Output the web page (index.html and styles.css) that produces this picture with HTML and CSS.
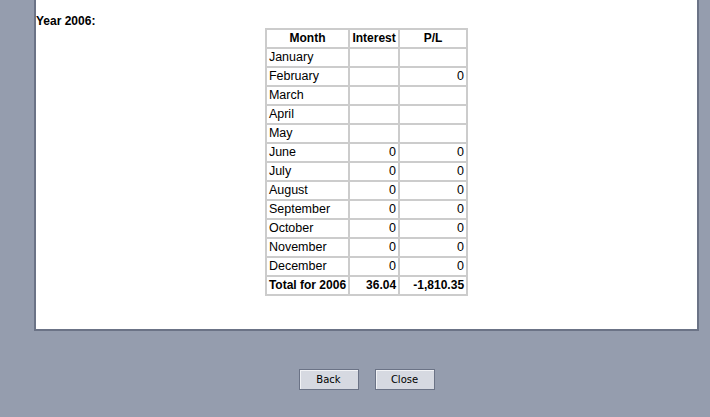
FILE: index.html
```html
<!DOCTYPE html>
<html>
<head>
<meta charset="utf-8">
<link rel="stylesheet" href="styles.css">
</head>
<body>
<div class="panel">
  <div class="year">Year 2006:</div>
  <table class="report">
    <tr class="head"><th class="c1">Month</th><th class="c2">Interest</th><th class="c3">P/L</th></tr>
    <tr><td>January</td><td class="n"></td><td class="n"></td></tr>
    <tr><td>February</td><td class="n"></td><td class="n">0</td></tr>
    <tr><td>March</td><td class="n"></td><td class="n"></td></tr>
    <tr><td>April</td><td class="n"></td><td class="n"></td></tr>
    <tr><td>May</td><td class="n"></td><td class="n"></td></tr>
    <tr><td>June</td><td class="n">0</td><td class="n">0</td></tr>
    <tr><td>July</td><td class="n">0</td><td class="n">0</td></tr>
    <tr><td>August</td><td class="n">0</td><td class="n">0</td></tr>
    <tr><td>September</td><td class="n">0</td><td class="n">0</td></tr>
    <tr><td>October</td><td class="n">0</td><td class="n">0</td></tr>
    <tr><td>November</td><td class="n">0</td><td class="n">0</td></tr>
    <tr><td>December</td><td class="n">0</td><td class="n">0</td></tr>
    <tr class="total"><td>Total for 2006</td><td class="n">36.04</td><td class="n">-1,810.35</td></tr>
  </table>
</div>
<div class="actions">
  <button class="btn">Back</button>
  <button class="btn">Close</button>
</div>
</body>
</html>
```
FILE: styles.css
```css
html, body {
  margin: 0;
  padding: 0;
  background: #959dae;
  font-family: "Liberation Sans", Arial, sans-serif;
  font-size: 12px;
  color: #000;
}
.panel {
  margin-left: 34px;
  width: 661px;
  height: 329px;
  background: #fff;
  border: 2px solid #6b7386;
  border-top: none;
  box-sizing: content-box;
}
.year {
  font-weight: bold;
  padding-top: 14px;
  line-height: 14px;
  height: 14px;
}
.report {
  margin: 0 auto;
  border-collapse: collapse;
}
.report th, .report td {
  border: 2px solid #cccccc;
  height: 17px;
  padding: 0 2px;
  line-height: 17px;
  white-space: nowrap;
  text-align: left;
  font-size: 12.5px;
}
.report th {
  font-weight: bold;
  text-align: center;
  font-size: 12px;
}
.report .c1 { width: 75px; }
.report .c2 { width: 44px; }
.report .c3 { width: 62px; }
.report td.n { text-align: right; }
.report .total td { font-weight: bold; font-size: 12px; }
.actions {
  width: 665px;
  margin-left: 34px;
  display: flex;
  justify-content: center;
  gap: 16px;
  padding-top: 38px;
}
.btn {
  width: 60px;
  height: 21px;
  background: #d6d9e1;
  border: 1px solid #6b7386;
  box-shadow: inset 1px 1px 0 #f2f3f6;
  font-family: "DejaVu Sans", Verdana, sans-serif;
  font-size: 10px;
  color: #000;
  padding: 0;
  margin: 0;
}
```
